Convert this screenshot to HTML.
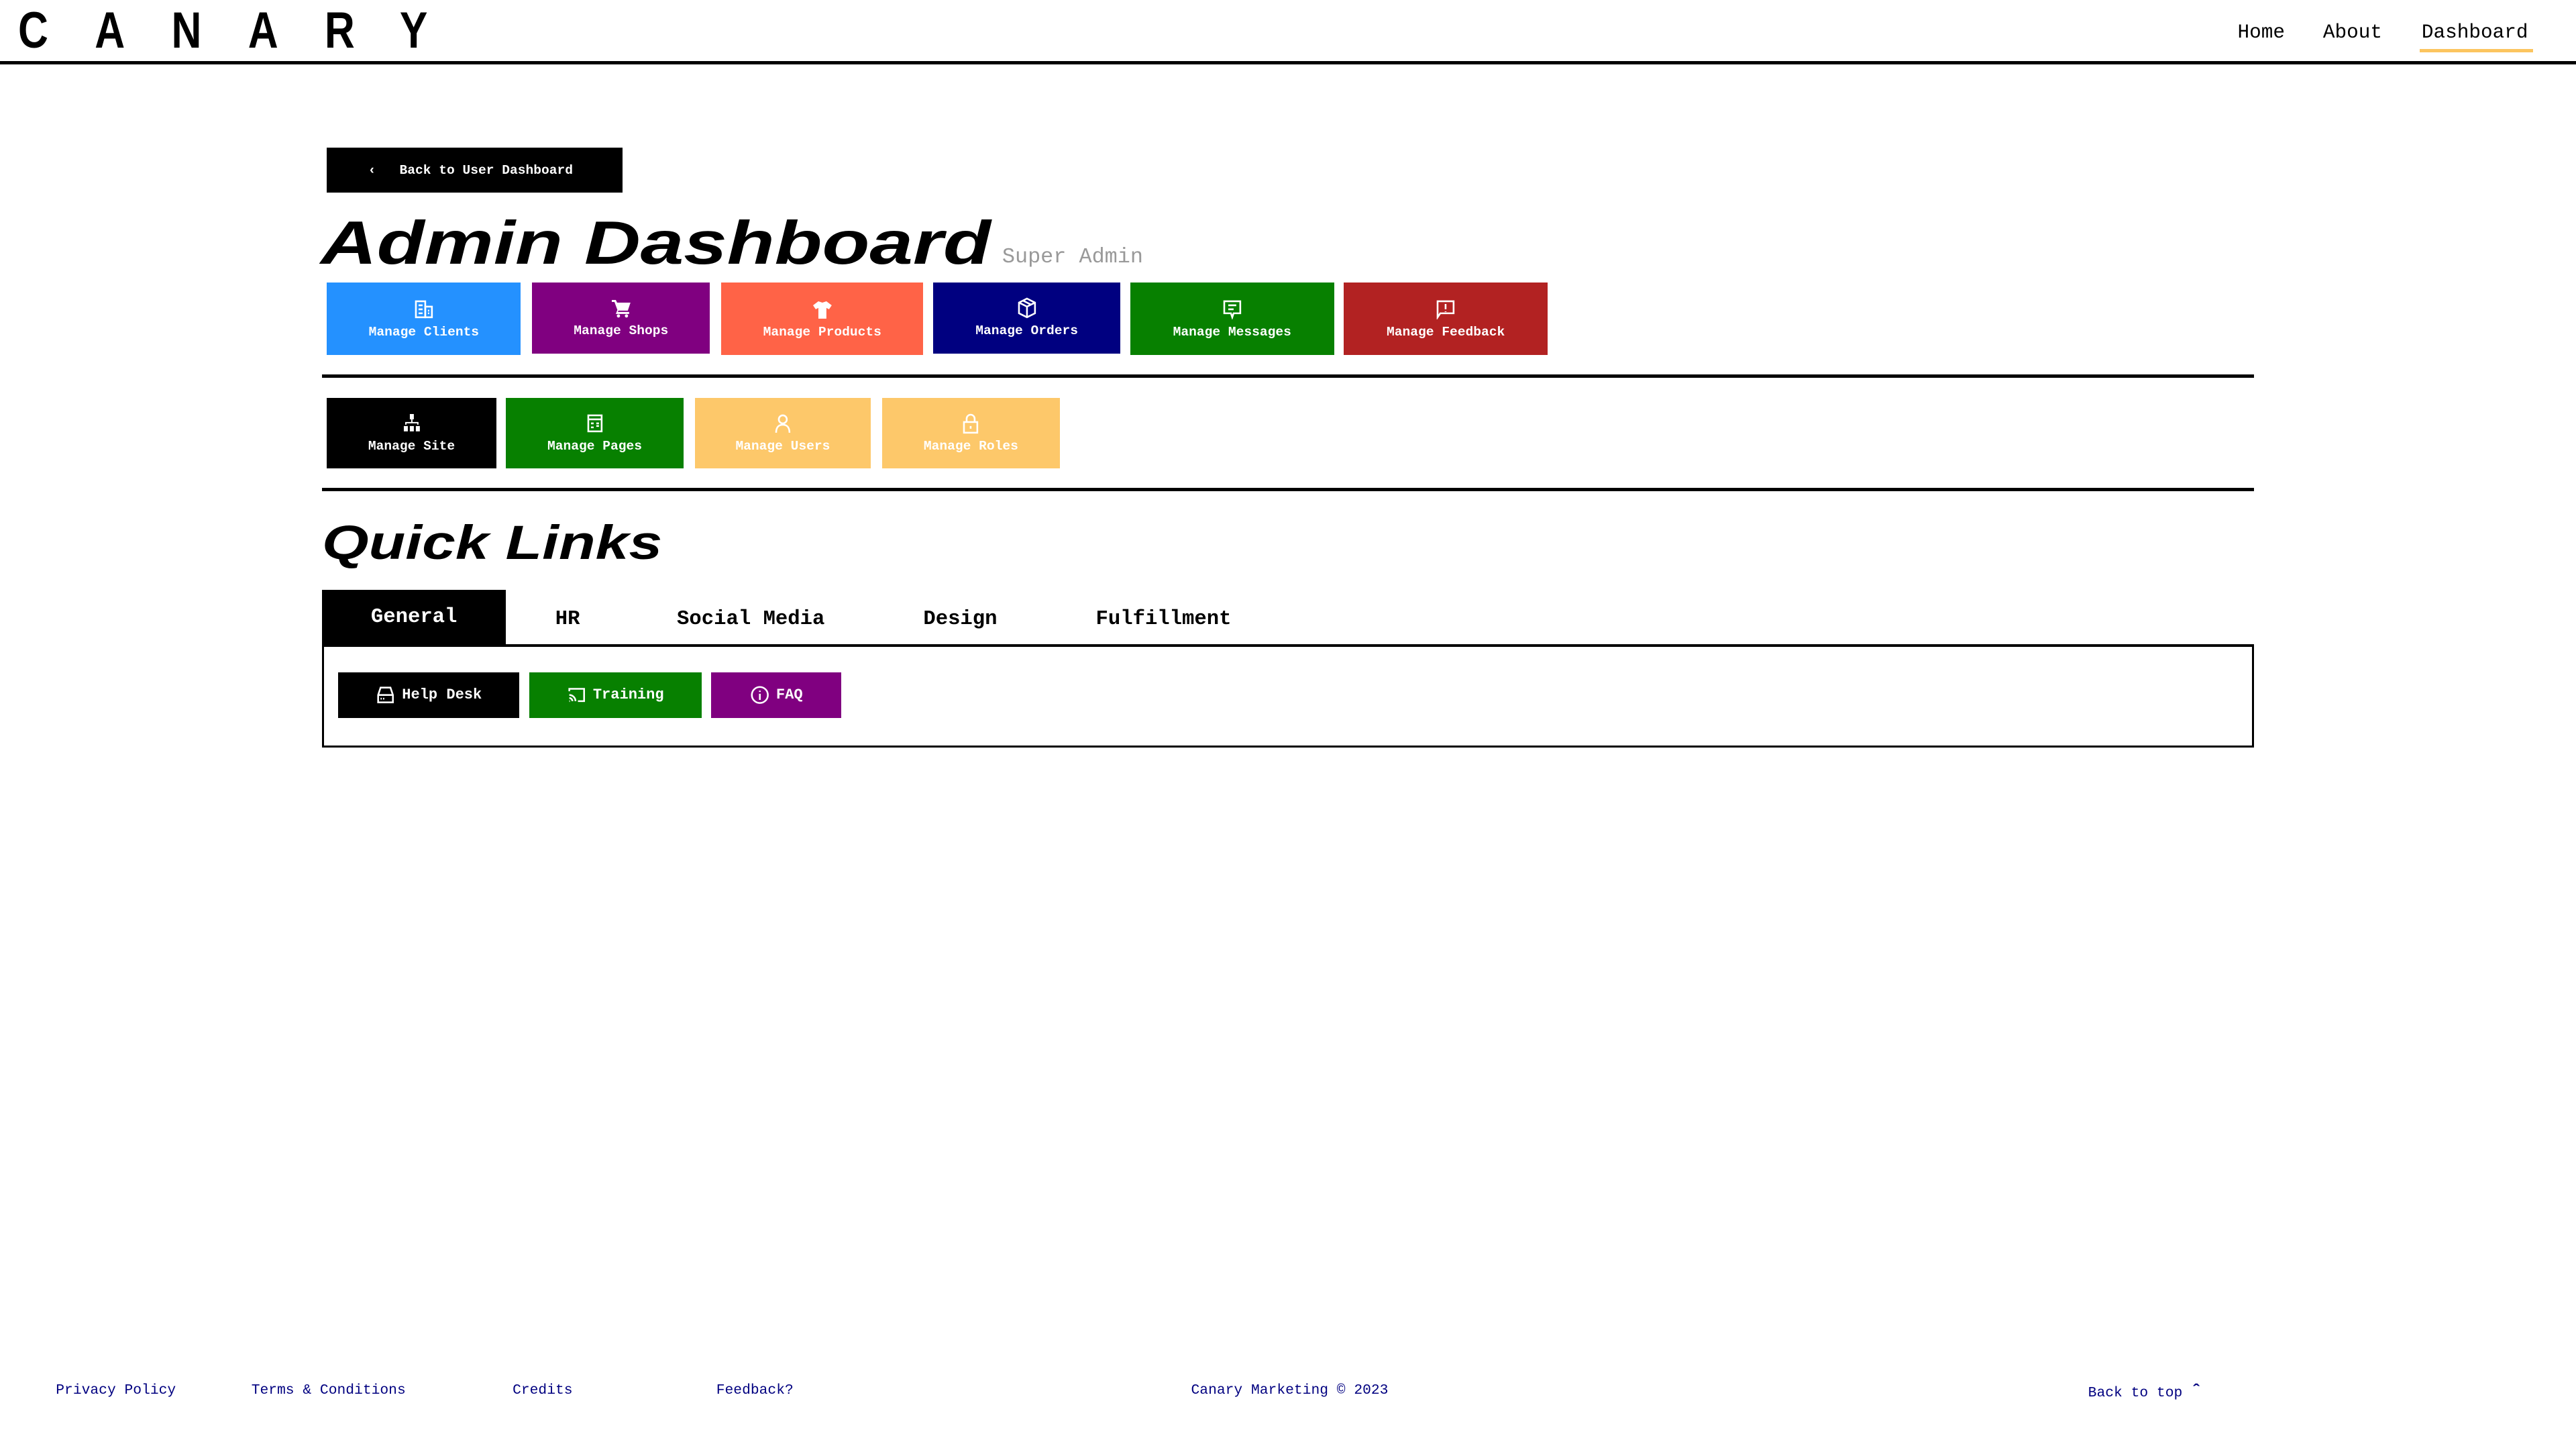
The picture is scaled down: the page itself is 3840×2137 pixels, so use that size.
<!DOCTYPE html>
<html><head><meta charset="utf-8"><style>
*{margin:0;padding:0;box-sizing:border-box}
html,body{width:3840px;height:2137px;overflow:hidden;background:#fff}
#w{zoom:2.449;position:relative;width:1568px;height:873px;font-family:"Liberation Mono",monospace}
.a{position:absolute}
.logo{left:11px;top:1px;font-family:"Liberation Sans",sans-serif;font-size:31px;letter-spacing:34.5px;font-weight:bold;line-height:36px;transform:scaleX(.82);transform-origin:left}
.hr{left:0;top:37px;width:1568px;height:2px;background:#000}
.nav{top:13px;font-size:12px;color:#000}
.tile{color:#fff;font-size:8px;font-weight:bold;text-align:center;display:flex;flex-direction:column;align-items:center;justify-content:center;gap:3px}
.tile svg{width:13px;height:13px}
.big{font-family:"Liberation Sans",sans-serif;font-weight:bold;font-style:italic;transform-origin:left;white-space:nowrap}
.rule{left:196px;width:1176px;height:2px;background:#000}
.tab{top:360px;height:34px;line-height:34px;font-size:12.5px;font-weight:bold}
.btn{top:409px;height:28px;color:#fff;font-size:9px;font-weight:bold;display:flex;align-items:center;justify-content:center;gap:4px}
.ft{top:841px;font-size:8.7px;color:#000080}
</style></head><body><div id="w">
<div class="a logo">CANARY</div>
<div class="a hr"></div>
<div class="a nav" style="left:1362px">Home</div>
<div class="a nav" style="left:1414px">About</div>
<div class="a nav" style="left:1474px">Dashboard</div>
<div class="a" style="left:1473px;top:30px;width:69px;height:2px;background:#fcc55f"></div>

<div class="a" style="left:199px;top:90px;width:180px;height:27px;background:#000;color:#fff;font-size:8px;font-weight:bold;line-height:28px;padding-left:25px">&#8249;&nbsp;&nbsp;&nbsp;Back to User Dashboard</div>

<div class="a big" style="left:195px;top:127px;font-size:37px;transform:scaleX(1.28)">Admin Dashboard</div>
<div class="a" style="left:610px;top:149px;font-size:13px;color:#999">Super Admin</div>

<div class="a tile" style="left:199px;top:172px;width:118px;height:44px;background:#2491ff"><svg viewBox="0 0 16 16" fill="none" stroke="#fff" stroke-width="1.3"><rect x="2" y="2" width="7" height="12"/><rect x="9" y="6" width="5" height="8"/><path d="M4 5h3M4 8h3M4 11h3M11 9h1M11 11h1"/></svg>Manage Clients</div>
<div class="a tile" style="left:324px;top:172px;width:108px;height:43px;background:#800080"><svg viewBox="0 0 16 16" fill="#fff"><path d="M1 2h3l1 2h10l-2 6H6l-.5 1H14v1.5H4l1.2-3L3 3.5H1z"/><circle cx="6" cy="14" r="1.2"/><circle cx="12" cy="14" r="1.2"/></svg>Manage Shops</div>
<div class="a tile" style="left:439px;top:172px;width:123px;height:44px;background:#ff6347"><svg viewBox="0 0 16 16" fill="#fff"><path d="M5 2l3 1 3-1 4 3-2 3-2-1v8H5V7L3 8 1 5z"/></svg>Manage Products</div>
<div class="a tile" style="left:568px;top:172px;width:114px;height:43px;background:#000080"><svg viewBox="0 0 16 16" fill="none" stroke="#fff" stroke-width="1.3"><path d="M8 1l6 3v8l-6 3-6-3V4zM2 4l6 3 6-3M8 7v8M5 2.5l6 3"/></svg>Manage Orders</div>
<div class="a tile" style="left:688px;top:172px;width:124px;height:44px;background:#078000"><svg viewBox="0 0 16 16" fill="none" stroke="#fff" stroke-width="1.3"><path d="M2 2h12v9H9l-1 3-1-3H2z M5 5h6M5 8h4"/></svg>Manage Messages</div>
<div class="a tile" style="left:818px;top:172px;width:124px;height:44px;background:#b22222"><svg viewBox="0 0 16 16" fill="none" stroke="#fff" stroke-width="1.3"><path d="M2 2h12v9H4l-2 3z M8 4v4M8 9.5v.5"/></svg>Manage Feedback</div>

<div class="a rule" style="top:228px"></div>

<div class="a tile" style="left:199px;top:242px;width:103px;height:43px;background:#000"><svg viewBox="0 0 16 16" fill="#fff"><rect x="6.5" y="1" width="3" height="4"/><path d="M7.5 5h1v2H13v2h-1V8H4v1H3V7h4.5z"/><rect x="2" y="10" width="3" height="4"/><rect x="6.5" y="10" width="3" height="4"/><rect x="11" y="10" width="3" height="4"/></svg>Manage Site</div>
<div class="a tile" style="left:308px;top:242px;width:108px;height:43px;background:#078000"><svg viewBox="0 0 16 16" fill="none" stroke="#fff" stroke-width="1.3"><rect x="3" y="2" width="10" height="12"/><path d="M3 5h10M5 8h2M5 11h2M9 8h2M9 10h2"/></svg>Manage Pages</div>
<div class="a tile" style="left:423px;top:242px;width:107px;height:43px;background:#fdc86a"><svg viewBox="0 0 16 16" fill="none" stroke="#fff" stroke-width="1.3"><circle cx="8" cy="5" r="3"/><path d="M3 15c0-4 2-6 5-6s5 2 5 6"/></svg>Manage Users</div>
<div class="a tile" style="left:537px;top:242px;width:108px;height:43px;background:#fdc86a"><svg viewBox="0 0 16 16" fill="none" stroke="#fff" stroke-width="1.3"><rect x="3" y="7" width="10" height="8"/><path d="M5 7V4.5a3 3 0 016 0V7M8 10v2"/></svg>Manage Roles</div>

<div class="a rule" style="top:297px"></div>

<div class="a big" style="left:196px;top:314px;font-size:29px;transform:scaleX(1.26)">Quick Links</div>

<div class="a tab" style="left:196px;top:359px;width:112px;background:#000;color:#fff;text-align:center">General</div>
<div class="a tab" style="left:338px">HR</div>
<div class="a tab" style="left:412px">Social Media</div>
<div class="a tab" style="left:562px">Design</div>
<div class="a tab" style="left:667px">Fulfillment</div>
<div class="a" style="left:196px;top:392px;width:1176px;height:63px;border:1.5px solid #000;border-top-width:2px"></div>

<div class="a btn" style="left:206px;width:110px;background:#000"><svg width="12" height="12" viewBox="0 0 16 16" fill="none" stroke="#fff" stroke-width="1.4"><path d="M4 2h8l2 6v6H2V8zM2 8h12M4 11h1M6 11h1"/></svg>Help Desk</div>
<div class="a btn" style="left:322px;width:105px;background:#078000"><svg width="12" height="12" viewBox="0 0 16 16" fill="none" stroke="#fff" stroke-width="1.4"><path d="M2 5V3h12v10H9M2 8a5 5 0 015 5M2 10.5a2.5 2.5 0 012.5 2.5M2 13h.5"/></svg>Training</div>
<div class="a btn" style="left:433px;width:79px;background:#800080"><svg width="12" height="12" viewBox="0 0 16 16" fill="none" stroke="#fff" stroke-width="1.4"><circle cx="8" cy="8" r="6.5"/><path d="M8 7v5M8 4.5v1"/></svg>FAQ</div>

<div class="a ft" style="left:34px">Privacy Policy</div>
<div class="a ft" style="left:153px">Terms &amp; Conditions</div>
<div class="a ft" style="left:312px">Credits</div>
<div class="a ft" style="left:436px">Feedback?</div>
<div class="a ft" style="left:725px">Canary Marketing &#169; 2023</div>
<div class="a ft" style="left:1271px">Back to top <b style="font-size:11px">&#710;</b></div>
</div></body></html>
